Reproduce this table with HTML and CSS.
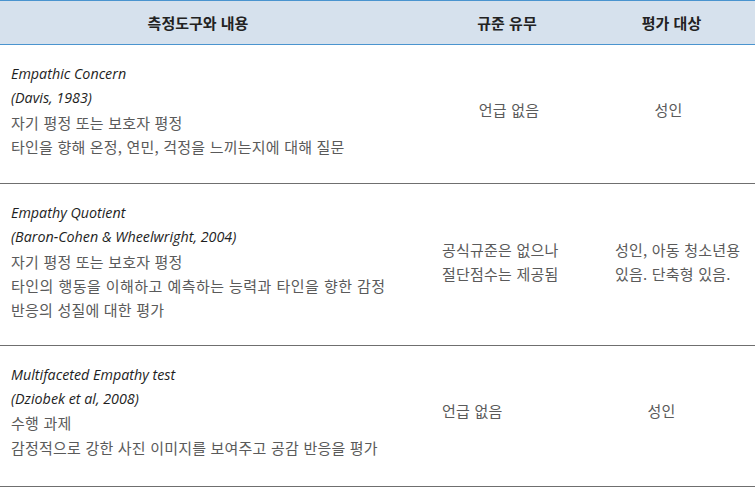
FILE: index.html
```html
<!DOCTYPE html>
<html lang="ko">
<head>
<meta charset="utf-8">
<title>공감 측정도구</title>
<link rel="stylesheet" href="styles.css">
</head>
<body>
<table class="tbl">
  <colgroup>
    <col class="c1">
    <col class="c2">
    <col class="c3">
  </colgroup>
  <thead>
    <tr class="head">
      <th class="h1">측정도구와 내용</th>
      <th class="h2">규준 유무</th>
      <th class="h3">평가 대상</th>
    </tr>
  </thead>
  <tbody>
    <tr class="row">
      <td class="desc">
        <div class="en">Empathic Concern</div>
        <div class="en">(Davis, 1983)</div>
        <div class="ko">자기 평정 또는 보호자 평정</div>
        <div class="ko">타인을 향해 온정, 연민, 걱정을 느끼는지에 대해 질문</div>
      </td>
      <td class="mid r1a">언급 없음</td>
      <td class="mid r1b">성인</td>
    </tr>
    <tr class="row row2">
      <td class="desc">
        <div class="en">Empathy Quotient</div>
        <div class="en">(Baron-Cohen &amp; Wheelwright, 2004)</div>
        <div class="ko">자기 평정 또는 보호자 평정</div>
        <div class="ko wide">타인의 행동을 이해하고 예측하는 능력과 타인을 향한 감정</div>
        <div class="ko">반응의 성질에 대한 평가</div>
      </td>
      <td class="mid r2a">공식규준은 없으나<br>절단점수는 제공됨</td>
      <td class="mid r2b">성인, 아동 청소년용<br>있음. 단축형 있음.</td>
    </tr>
    <tr class="row row3">
      <td class="desc">
        <div class="en">Multifaceted Empathy test</div>
        <div class="en">(Dziobek et al, 2008)</div>
        <div class="ko">수행 과제</div>
        <div class="ko">감정적으로 강한 사진 이미지를 보여주고 공감 반응을 평가</div>
      </td>
      <td class="mid r3a">언급 없음</td>
      <td class="mid r3b">성인</td>
    </tr>
  </tbody>
</table>
</body>
</html>
```
FILE: styles.css
```css
html, body {
  margin: 0;
  padding: 0;
  background: #ffffff;
}
body {
  font-family: "Noto Sans CJK KR", sans-serif;
  font-size: 15px;
  color: #5a5a5a;
}
.tbl {
  width: 755px;
  border-collapse: collapse;
  table-layout: fixed;
}
.c1 { width: 396px; }
.c2 { width: 210px; }
.c3 { width: 149px; }

.head th {
  background: #d6e1ed;
  border-top: 1px solid #4a94cf;
  border-bottom: 1px solid #4a94cf;
  height: 43px;
  padding: 0;
  font-family: "Noto Sans CJK KR", sans-serif;
  font-size: 15px;
  font-weight: 700;
  color: #222222;
  text-align: center;
  vertical-align: middle;
}
.h2 { padding-left: 12px !important; }
.h3 { padding-right: 18px !important; }

.row td {
  border-bottom: 1px solid #6f6f6f;
  padding: 17px 0 24px 0;
  line-height: 24.3px;
  vertical-align: middle;
  font-family: "Noto Sans CJK KR", sans-serif;
  font-size: 15px;
  letter-spacing: 0.2px;
}
.row2 td { padding-bottom: 22px; }
.row3 td { padding-bottom: 26px; }
.row td.desc {
  padding-left: 11px;
  vertical-align: top;
}
.en {
  font-family: "Open Sans", "Noto Sans", sans-serif;
  font-style: italic;
  font-size: 14.3px;
  letter-spacing: 0;
  color: #1e1e1e;
}
.ko {
  font-family: "Noto Sans CJK KR", sans-serif;
  color: #5a5a5a;
}
.wide { letter-spacing: 0.45px; }
.r1a { text-align: center; padding-left: 16px !important; }
.r1b { text-align: center; padding-right: 24px !important; }
.r2a { text-align: left; padding-left: 46px !important; }
.r2b { text-align: left; padding-left: 9px !important; }
.r3a { text-align: left; padding-left: 46px !important; }
.r3b { text-align: center; padding-right: 38px !important; }
```
